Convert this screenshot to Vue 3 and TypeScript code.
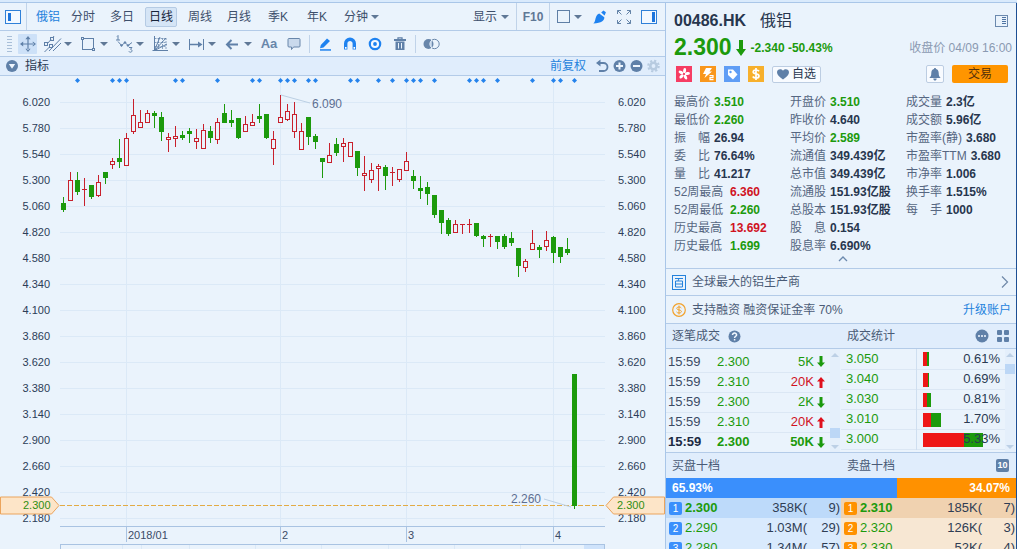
<script setup lang="ts">
import { ref } from 'vue'

type Candle = [up: 0 | 1, high: number, top: number, bottom: number, low: number]

// Vertical positions of high, body top, body bottom and low for each session
const candles: Candle[] = [
  [0, 197, 203, 209, 211], [1, 172, 180, 200, 200], [0, 172, 180, 191, 194], [1, 178, 189, 189, 205],
  [0, 185, 185, 196, 198], [1, 175, 182, 195, 196], [0, 172, 172, 177, 183], [1, 158, 161, 164, 168],
  [0, 139, 158, 161, 167], [1, 133, 138, 165, 165], [1, 99, 115, 131, 133], [1, 110, 122, 127, 127],
  [1, 110, 113, 122, 122], [0, 111, 113, 115, 127], [0, 112, 117, 131, 140], [1, 133, 137, 139, 151],
  [1, 126, 136, 138, 146], [0, 131, 135, 137, 139], [0, 128, 131, 133, 142], [1, 129, 138, 141, 148],
  [1, 124, 130, 148, 148], [0, 126, 131, 137, 142], [1, 118, 122, 139, 143], [0, 104, 113, 122, 122],
  [0, 110, 120, 122, 126], [0, 118, 118, 137, 138], [1, 116, 124, 131, 131], [1, 114, 122, 125, 125],
  [0, 104, 116, 118, 122], [0, 114, 114, 137, 138], [1, 131, 139, 148, 164], [1, 95, 117, 122, 122],
  [1, 104, 111, 119, 120], [1, 102, 114, 131, 137], [1, 123, 131, 149, 149], [0, 117, 117, 136, 144],
  [0, 134, 136, 141, 148], [0, 158, 158, 161, 177], [1, 143, 155, 162, 162], [0, 138, 144, 152, 155],
  [1, 138, 143, 146, 161], [1, 142, 142, 156, 156], [0, 151, 151, 167, 175], [1, 156, 173, 175, 190],
  [1, 163, 170, 179, 182], [1, 164, 166, 168, 190], [0, 165, 167, 175, 189], [1, 167, 172, 172, 185],
  [1, 169, 169, 179, 181], [1, 152, 161, 170, 170], [0, 170, 176, 180, 188], [0, 176, 188, 190, 198],
  [0, 182, 187, 193, 204], [0, 195, 195, 214, 217], [0, 210, 210, 222, 233], [0, 218, 220, 233, 235],
  [1, 220, 224, 232, 232], [1, 224, 224, 224, 233], [1, 219, 224, 224, 232], [0, 223, 223, 235, 236],
  [0, 235, 236, 238, 246], [1, 234, 236, 236, 246], [0, 236, 236, 241, 248], [0, 234, 236, 246, 248],
  [0, 232, 238, 242, 245], [0, 248, 248, 265, 276], [1, 259, 261, 267, 271], [1, 230, 243, 249, 249],
  [0, 245, 247, 249, 257], [1, 231, 240, 246, 250], [0, 236, 237, 252, 262], [0, 247, 247, 256, 262],
  [0, 238, 249, 252, 254], [0, 374, 374, 505, 508],
]
const events = [2, 7, 8, 9, 16, 17, 22, 27, 28, 31, 32, 33, 35, 36, 41, 42, 45, 47, 49, 50, 51, 53, 58, 59, 60, 62, 67, 70, 71, 73]
const cx = (i: number) => 63 + i * 7
const prices = Array.from({ length: 17 }, (_, i) => (6.02 - i * 0.24).toFixed(3))
const months = [
  { x: 126, label: '2018/01' },
  { x: 280, label: '2' },
  { x: 406, label: '3' },
  { x: 553, label: '4' },
]

const periods = ['分时', '多日', '日线', '周线', '月线', '季K', '年K']
const period = ref('日线')
const drawTools = [
  { id: 'channel', name: '平行线' },
  { id: 'rect', name: '矩形' },
  { id: 'wave', name: '波浪' },
  { id: 'gann', name: '江恩' },
  { id: 'range', name: '区间' },
  { id: 'arrow', name: '箭头' },
]

type Stat = { k: string; v: string; c?: string; wide?: boolean }
const stats: Stat[][] = [
  [
    { k: '最高价', v: '3.510', c: 'down' }, { k: '最低价', v: '2.260', c: 'down' }, { k: '振 幅', v: '26.94' },
    { k: '委 比', v: '76.64%' }, { k: '量 比', v: '41.217' }, { k: '52周最高', v: '6.360', c: 'up', wide: true },
    { k: '52周最低', v: '2.260', c: 'down', wide: true }, { k: '历史最高', v: '13.692', c: 'up', wide: true },
    { k: '历史最低', v: '1.699', c: 'down', wide: true },
  ],
  [
    { k: '开盘价', v: '3.510', c: 'down' }, { k: '昨收价', v: '4.640' }, { k: '平均价', v: '2.589', c: 'down' },
    { k: '流通值', v: '349.439亿' }, { k: '总市值', v: '349.439亿' }, { k: '流通股', v: '151.93亿股' },
    { k: '总股本', v: '151.93亿股' }, { k: '股 息', v: '0.154' }, { k: '股息率', v: '6.690%' },
  ],
  [
    { k: '成交量', v: '2.3亿' }, { k: '成交额', v: '5.96亿' }, { k: '市盈率(静)', v: '3.680', wide: true },
    { k: '市盈率TTM', v: '3.680', wide: true }, { k: '市净率', v: '1.006' }, { k: '换手率', v: '1.515%' },
    { k: '每 手', v: '1000' },
  ],
]
const trades = [
  { p: '2.300', q: '5K', up: false },
  { p: '2.310', q: '20K', up: true },
  { p: '2.300', q: '2K', up: false },
  { p: '2.310', q: '20K', up: true },
  { p: '2.300', q: '50K', up: false },
]
const volumes = [
  { p: '3.050', buy: 4, sell: 2, pct: '0.61%' },
  { p: '3.040', buy: 5, sell: 1, pct: '0.69%' },
  { p: '3.030', buy: 4, sell: 4, pct: '0.81%' },
  { p: '3.010', buy: 8, sell: 10, pct: '1.70%' },
  { p: '3.000', buy: 41, sell: 19, pct: '5.33%' },
]
const ratio = { bid: 65.93, ask: 34.07 }
const depth = [
  { side: 'bid', name: '买盘', rows: [['2.300', '358K', '9'], ['2.290', '1.03M', '29'], ['2.280', '1.34M', '57']] },
  { side: 'ask', name: '卖盘', rows: [['2.310', '185K', '7'], ['2.320', '126K', '3'], ['2.330', '52K', '4']] },
]
</script>

<template>
  <div class="app">
    <div class="strip"></div>
    <div class="panes">
      <main class="left">
        <nav class="bar periods">
          <button class="ico side-toggle" aria-label="侧栏">
            <svg width="16" height="14" viewBox="0 0 16 14"><rect x=".5" y=".5" width="15" height="13" fill="#f2f8ff" stroke="#2f80d8" /><rect x="3" y="3" width="3" height="8" fill="#1b74dc" /></svg>
          </button>
          <i class="vline full"></i>
          <div class="tabs">
            <button class="symbol">俄铝</button>
            <button v-for="p in periods" :key="p" class="tab" :class="{ on: p === period }" @click="period = p">{{ p }}</button>
            <button class="menu">分钟<i class="tri"></i></button>
          </div>
          <div class="view">
            <button class="menu">显示<i class="tri"></i></button>
            <i class="vline full"></i>
            <button class="f10">F10</button>
            <i class="vline full"></i>
            <button class="menu" aria-label="布局"><svg width="13" height="13" viewBox="0 0 13 13"><rect x=".5" y=".5" width="12" height="12" fill="none" stroke="#5f7fa6" /></svg><i class="tri"></i></button>
            <button class="ico" aria-label="画笔">
              <svg width="14" height="14" viewBox="0 0 14 14" fill="#1e82f0"><path d="M8.200 2.600 10.400.4 12.900 2.200 11.600 5.400z" /><path d="M6.200 3.600 11.300 7.200C11.600 10.500 8.500 13 .4 13.500 2.600 11.600 1.900 9.200 3.200 6.600 3.900 5 5 4 6.200 3.600z" /></svg>
            </button>
            <button class="ico" aria-label="全屏">
              <svg width="14" height="14" viewBox="0 0 14 14" fill="none" stroke="#6484a8"><path d="M4 .5H.5V4M.5.5l4 4M10 .5h3.500V4M13.500.5l-4 4M4 13.500H.5V10M.5 13.500l4-4M10 13.500h3.500V10M13.500 13.500l-4-4" /></svg>
            </button>
            <button class="ico" aria-label="报价栏">
              <svg width="16" height="14" viewBox="0 0 16 14"><rect x=".5" y=".5" width="15" height="13" fill="#f2f8ff" stroke="#2f80d8" /><rect x="11" y="2" width="3" height="10" fill="#1b74dc" /></svg>
            </button>
          </div>
        </nav>

        <div class="bar tools">
          <svg class="grip" width="6" height="16" viewBox="0 0 6 16" stroke="#a9bfd8"><path d="M0 .5h5M0 3.500h5M0 6.500h5M0 9.500h5M0 12.500h5M0 15.500h5" /></svg>
          <button class="move" aria-label="移动">
            <svg width="16" height="16" viewBox="0 0 16 16" fill="#5f80a8"><path d="M7.400 2h1.200v12H7.400zM2 7.400h12v1.200H2zM8 0l2.600 3.200H5.400zM8 16l2.600-3.200H5.400zM0 8l3.200-2.600v5.200zM16 8l-3.200-2.600v5.200z" /></svg>
          </button>
          <div class="draw">
            <button v-for="t in drawTools" :key="t.id" :aria-label="t.name">
              <svg width="20" height="18" viewBox="0 0 20 18" fill="none" stroke="#5f80a8">
                <template v-if="t.id === 'channel'">
                  <path d="M4.500 8.500 8 4.500M10 2.500 11 1M6 16 18 3.500M10 16 18 8M1.500 17l5-5" />
                  <rect x="1.500" y="7.500" width="3" height="3" /><rect x="7.500" y="2.500" width="3" height="3" /><rect x="6.500" y="9.500" width="3" height="3" />
                </template>
                <template v-else-if="t.id === 'rect'">
                  <rect x="3.500" y="3.500" width="11" height="11" />
                  <g fill="#eaf3fc"><rect x="2.500" y="2.500" width="2" height="2" /><rect x="13.500" y="13.500" width="2" height="2" /></g>
                </template>
                <template v-else-if="t.id === 'wave'">
                  <path d="M3 6.500 6.500 10.500 10 7.500 13 10.500 17 7.500M2 1.500l1-1v4.500M1 5h4M14 12.500h3l-1.500 1.800c2 .2 2 2.900-.1 2.900-.8 0-1.300-.3-1.500-.8" />
                  <g fill="#5f80a8"><circle cx="6.500" cy="10.500" r=".8" /><circle cx="10" cy="7.500" r=".8" /><circle cx="13" cy="10.500" r=".8" /></g>
                </template>
                <template v-else-if="t.id === 'gann'">
                  <path d="M3.500 1v15M1.500 15.500H17M3.500 15.500 15 3M3.500 15.500 16 9M3.500 15.500 9 2" />
                  <path d="M3.500 3.500H15M3.500 7.500H15M3.500 11.500h12M7.500 3v12M11.500 3v12M15 3v12" stroke-width=".7" stroke-dasharray="2 1" />
                </template>
                <template v-else-if="t.id === 'range'">
                  <path d="M2.500 4v11M16.500 4v11" /><path d="M3 9.500h9" stroke-width="1.500" /><path d="M11 6.500 15.500 9.500 11 12.500z" fill="#5f80a8" stroke="none" />
                </template>
                <template v-else>
                  <path d="M4 9.500h11M8.500 5 4 9.500 8.500 14" stroke-width="2" />
                </template>
              </svg>
              <i class="tri"></i>
            </button>
          </div>
          <div class="marks">
            <button class="aa">Aa</button>
            <button aria-label="备注"><svg width="14" height="14" viewBox="0 0 14 14"><path d="M2 1.500h10a1 1 0 0 1 1 1V9a1 1 0 0 1-1 1H6.500l-2 2.500V10H2a1 1 0 0 1-1-1V2.500a1 1 0 0 1 1-1z" fill="#c9d9ec" stroke="#6886aa" /></svg></button>
            <i class="vline"></i>
            <button aria-label="铅笔"><svg width="14" height="14" viewBox="0 0 14 14" fill="#1e82f0"><path d="M9 1.500 12 4 5.500 10.500 2 11.200 2.800 8z" /><path d="M2 12.200h11v1.500H2z" /></svg></button>
            <button aria-label="磁铁"><svg width="14" height="14" viewBox="0 0 14 14"><path d="M2.700 12.500V6.500a4.300 4.300 0 0 1 8.600 0v6" fill="none" stroke="#1e82f0" stroke-width="3.400" /><path d="M2 10h1.600v1.700H2zM10.500 10h1.600v1.700h-1.600z" fill="#fff" /></svg></button>
            <button aria-label="显示画线"><svg width="14" height="14" viewBox="0 0 14 14"><circle cx="7" cy="7" r="5.200" fill="#f4f9ff" stroke="#1e82f0" stroke-width="2.200" /><circle cx="7" cy="7" r="1.900" fill="#1e82f0" /></svg></button>
            <button aria-label="删除"><svg width="12" height="14" viewBox="0 0 12 14"><path d="M4 2V.9h4V2" fill="none" stroke="#5f80a8" stroke-width="1.300" /><path d="M0 2h12v2H0zM1.500 4.500h9V13h-9z" fill="#5f80a8" /><path d="M4.500 6v5.500M7.500 6v5.500" stroke="#eaf3fc" /></svg></button>
            <i class="vline"></i>
            <button aria-label="对比"><svg width="17" height="12" viewBox="0 0 17 12"><circle cx="11.500" cy="6" r="4.700" fill="none" stroke="#6886aa" /><circle cx="5.500" cy="6" r="5" fill="#6886aa" /><path d="M9 2a4.800 4.800 0 0 0 0 8" fill="#b5c9e0" stroke="#e6f0fb" /></svg></button>
          </div>
        </div>

        <div class="bar indicators">
          <button class="ico" aria-label="展开指标"><svg width="14" height="14" viewBox="0 0 14 14"><circle cx="7" cy="7" r="6" fill="#5f80a8" /><path d="M3.800 5h6.400L7 9.800z" fill="#eef5fd" /></svg></button>
          <span class="ind-title">指标</span>
          <a href="#" class="adjust">前复权</a>
          <div class="zoomers">
            <button aria-label="还原"><svg width="13" height="14" viewBox="0 0 13 14"><path d="M2 4h5.500a4 4 0 0 1 0 8H3" fill="none" stroke="#5f80a8" stroke-width="1.800" /><path d="M0 4 4.500.5v7z" fill="#5f80a8" /></svg></button>
            <button aria-label="放大"><svg width="13" height="14" viewBox="0 0 13 14"><circle cx="6.500" cy="7" r="6" fill="#5f80a8" /><path d="M6.500 3.500v7M3 7h7" stroke="#eef5fd" stroke-width="2" /></svg></button>
            <button aria-label="缩小"><svg width="13" height="14" viewBox="0 0 13 14"><circle cx="6.500" cy="7" r="6" fill="#5f80a8" /><path d="M3 7h7" stroke="#eef5fd" stroke-width="2" /></svg></button>
            <button aria-label="设置"><svg width="13" height="14" viewBox="0 0 13 14"><circle cx="6.500" cy="7" r="3.200" fill="none" stroke="#b7cbe0" stroke-width="2.600" /><circle cx="6.500" cy="7" r="5.300" fill="none" stroke="#b7cbe0" stroke-width="2" stroke-dasharray="2.160 2" /></svg></button>
          </div>
        </div>

        <section class="chart">
          <ol class="axis lhs"><li v-for="p in prices" :key="p">{{ p }}</li></ol>
          <svg class="plot" viewBox="60 76 545 473" role="img" aria-label="日线图" shape-rendering="crispEdges">
            <g fill="#dbe9f7">
              <rect v-for="(p, i) in prices" :key="p" x="60" :y="102 + i * 26" width="545" height="1" />
              <rect v-for="m in months" :key="m.x" :x="m.x" y="76" width="1" height="450" />
            </g>
            <g fill="#2482ec" shape-rendering="auto">
              <path v-for="e in events" :key="e" :d="`M${cx(e) + 0.5} 78l2.500 2.500-2.500 2.500-2.500-2.500z`" />
            </g>
            <g fill="#e2ab45">
              <rect v-for="n in 78" :key="n" :x="53 + n * 7" y="505" width="5" height="1" />
            </g>
            <g v-for="(c, i) in candles" :key="i" :fill="c[0] ? '#c8202c' : '#1c9a0c'">
              <rect :x="cx(i)" :y="c[1]" width="1" :height="c[4] - c[1] + 1" />
              <rect :x="cx(i) - 2" :y="c[2]" width="5" :height="c[3] - c[2] + 1" />
              <rect v-if="c[0] && c[3] - c[2] > 1" :x="cx(i) - 1" :y="c[2] + 1" width="3" :height="c[3] - c[2] - 1" fill="#eaf3fc" />
            </g>
            <g stroke="#bcd0e4" shape-rendering="auto"><path d="M281 95 310 103M544 499 571 507" /></g>
            <g class="note"><text x="312" y="108">6.090</text><text x="511" y="503">2.260</text></g>
            <g fill="#a9c3e2">
              <rect x="60" y="526" width="545" height="1" /><rect x="60" y="544" width="545" height="1" />
              <rect x="60" y="544" width="1" height="6" /><rect x="604" y="544" width="1" height="6" />
              <rect v-for="m in months" :key="m.x" :x="m.x" y="527" width="1" height="15" />
            </g>
            <rect x="584" y="545" width="20" height="4" fill="#cfe3fb" />
            <g fill="#dbe9f7"><rect v-for="x in [122, 141, 189, 255, 321, 388, 454, 520]" :key="x" :x="x" y="545" width="1" height="4" /></g>
            <g class="months"><text v-for="m in months" :key="m.x" :x="m.x + 2" y="539">{{ m.label }}</text></g>
          </svg>
          <ol class="axis rhs"><li v-for="p in prices" :key="p">{{ p }}</li></ol>
          <svg class="tag tag-l" width="60" height="19" viewBox="0 0 60 19"><path d="M.5 1H51.500L59 9.500 51.500 18H.5z" fill="#fde5c8" stroke="#eba45c" /><text x="23" y="13">2.300</text></svg>
          <svg class="tag tag-r" width="60" height="19" viewBox="0 0 60 19"><path d="M59.500 1H8.500L1 9.500 8.500 18H59.500z" fill="#fde5c8" stroke="#eba45c" /><text x="12" y="13">2.300</text></svg>
        </section>
      </main>

      <aside class="right">
        <header class="quote">
          <div class="title">
            <strong>00486.HK</strong><span>俄铝</span>
            <button aria-label="详情"><svg width="13" height="12" viewBox="0 0 13 12"><rect x=".5" y=".5" width="12" height="11" fill="none" stroke="#6b89ae" /><path d="M7 2.500h4M7 4.500h4M7 6.500h4M7 8.500h4" stroke="#4f74a3" /></svg></button>
          </div>
          <div class="last down">
            <b class="price">2.300</b>
            <svg width="10" height="16" viewBox="0 0 10 16"><path d="M3 0h4v9h3l-5 7L0 9h3z" fill="#1c9a0c" /></svg>
            <b class="chg">-2.340 -50.43%</b>
            <span class="time">收盘价 04/09 16:00</span>
          </div>
          <div class="badges">
            <svg width="16" height="16" viewBox="0 0 16 16"><rect width="16" height="16" fill="#f63d63" /><g fill="#fff"><ellipse v-for="a in [10, 82, 154, 226, 298]" :key="a" cx="8" cy="4.600" rx="1.500" ry="2.600" :transform="`rotate(${a} 8 8)`" /></g><circle cx="8" cy="8" r=".9" fill="#f63d63" /></svg>
            <svg width="16" height="16" viewBox="0 0 16 16"><rect width="16" height="16" fill="#f9971c" /><path d="M6 2h6L9.500 5.500H12L4.500 12l1.500-4H3z" fill="#fff" /><path d="M9.500 9.600H13v2h-3v2h3.500" fill="none" stroke="#fff" stroke-width="1.200" /></svg>
            <svg width="16" height="16" viewBox="0 0 16 16"><rect width="16" height="16" fill="#5f9df5" /><path d="M4 3.500h5L13.500 8.500 9 13.500 4 9z" fill="#fff" /><circle cx="6.500" cy="6" r="1.200" fill="#5f9df5" /></svg>
            <svg width="16" height="16" viewBox="0 0 16 16"><rect width="16" height="16" fill="#f7b02c" /><path d="M11 5.300C10.300 4.200 9.200 4 8 4 6.300 4 5.200 4.800 5.200 6c0 2.700 5.800 1.200 5.800 4 0 1.300-1.300 2-3 2-1.400 0-2.600-.4-3.200-1.500M8 2v12" fill="none" stroke="#fff" stroke-width="1.700" /></svg>
            <button class="fav"><svg width="12" height="11" viewBox="0 0 12 11"><path d="M6 10.500C2 7.500 0 5.500 0 3.200 0 .3 4-.9 6 1.800 8-.9 12 .3 12 3.200c0 2.300-2 4.300-6 7.300z" fill="#5f80a8" /></svg>自选</button>
            <button class="bell" aria-label="提醒"><svg width="12" height="13" viewBox="0 0 12 13"><path d="M6 0c.8 0 1 .5 1 1 2 .5 2.700 2.200 2.700 4 0 2.600.6 3.800 2 5H.3c1.400-1.200 2-2.400 2-5C2.300 3.200 3 1.500 5 1c0-.5.2-1 1-1zM4.300 10.500h3.400C7.500 12 7 12.600 6 12.600s-1.500-.6-1.700-2.100z" fill="#5f80a8" /></svg></button>
            <button class="trade">交易</button>
          </div>
          <div class="stats">
            <dl v-for="(col, i) in stats" :key="i">
              <div v-for="s in col" :key="s.k"><dt :class="{ wide: s.wide, spread: s.k.includes(' ') }">{{ s.k }}</dt><dd :class="s.c">{{ s.v }}</dd></div>
            </dl>
          </div>
          <button class="fold" aria-label="收起"><svg width="10" height="6" viewBox="0 0 10 6"><path d="M1 5 5 1 9 5" fill="none" stroke="#6b89ae" stroke-width="1.300" /></svg></button>
        </header>

        <a href="#" class="info company">
          <svg width="14" height="15" viewBox="0 0 14 15" fill="none" stroke="#2482dc"><rect x=".5" y=".5" width="13" height="14" /><path d="M3 3.500h8M7 3.500 6 6M3.500 6h7v6h-7zM3.500 9h7" /></svg>
          <span>全球最大的铝生产商</span>
          <svg class="go" width="8" height="12" viewBox="0 0 8 12"><path d="M1 .5 6.500 6 1 11.500" fill="none" stroke="#6f88a8" stroke-width="1.200" /></svg>
        </a>
        <div class="info margin">
          <svg width="14" height="14" viewBox="0 0 14 14" fill="none" stroke="#f2a22c"><circle cx="7" cy="7" r="6.300" stroke-width="1.200" /><path d="M9.300 5C8.800 4.200 8 4 7 4c-1.300 0-2.200.5-2.200 1.500C4.800 7.500 9.400 6.400 9.400 8.500c0 1-1 1.500-2.400 1.500-1.100 0-2-.3-2.500-1.100M7 2.500v9" /></svg>
          <span>支持融资 融资保证金率 70%</span>
          <a href="#">升级账户</a>
        </div>

        <div class="heads">
          <h2>逐笔成交<button aria-label="帮助"><svg width="13" height="13" viewBox="0 0 13 13"><circle cx="6.500" cy="6.500" r="6" fill="#5f80a8" /><path d="M4.500 5C4.500 2.400 8.700 2.500 8.600 5 8.500 6.300 6.600 6.300 6.600 8M6.600 9v1.500" fill="none" stroke="#f2f8ff" stroke-width="1.500" /></svg></button></h2>
          <h2>成交统计</h2>
          <button aria-label="更多"><svg width="14" height="14" viewBox="0 0 14 14"><circle cx="7" cy="7" r="6.500" fill="#5f80a8" /><path d="M3 7h2M6 7h2M9 7h2" stroke="#f2f8ff" stroke-width="1.500" /></svg></button>
          <button aria-label="分栏"><svg width="12" height="12" viewBox="0 0 12 12" fill="#5f80a8"><rect width="5" height="5" rx="1" /><rect x="7" width="5" height="5" rx="1" /><rect y="7" width="5" height="5" rx="1" /><rect x="7" y="7" width="5" height="5" rx="1" /></svg></button>
        </div>

        <div class="flow">
          <div class="pane ticks">
            <table>
              <tbody>
                <tr v-for="(t, i) in trades" :key="i" :class="{ latest: i === 4 }">
                  <td class="t">15:59</td><td class="p down">{{ t.p }}</td>
                  <td class="q" :class="t.up ? 'up' : 'down'">{{ t.q }}</td>
                  <td class="a"><svg width="8" height="11" viewBox="0 0 8 11"><path v-if="t.up" d="M4 0 8 4.500H5.500V11h-3V4.500H0z" fill="#e0101c" /><path v-else d="M4 11 8 6.500H5.500V0h-3v6.500H0z" fill="#1c9a0c" /></svg></td>
                </tr>
              </tbody>
            </table>
            <div class="scroll end"><i class="cap up-cap"></i><i class="thumb"></i><i class="cap"></i></div>
          </div>
          <div class="pane vols">
            <table>
              <tbody>
                <tr v-for="v in volumes" :key="v.p">
                  <td class="p down">{{ v.p }}</td>
                  <td class="v"><span class="bars"><i class="buy" :style="{ width: v.buy + 'px' }"></i><i class="sell" :style="{ width: v.sell + 'px' }"></i></span><span class="pct">{{ v.pct }}</span></td>
                </tr>
              </tbody>
            </table>
            <div class="scroll"><i class="cap up-cap"></i><i class="thumb"></i><i class="space"></i><i class="cap"></i></div>
          </div>
        </div>

        <div class="heads depth-head">
          <h2>买盘十档</h2>
          <h2>卖盘十档</h2>
          <button class="ten">10</button>
        </div>
        <div class="ratio">
          <b class="bid" :style="{ width: ratio.bid + '%' }">{{ ratio.bid }}%</b><b class="ask">{{ ratio.ask }}%</b>
        </div>
        <div class="depth">
          <table v-for="d in depth" :key="d.side" :class="d.side" :aria-label="d.name">
            <tbody>
              <tr v-for="(r, i) in d.rows" :key="i">
                <td class="n"><span>{{ i + 1 }}</span></td><td class="p down">{{ r[0] }}</td><td class="q">{{ r[1] }}(</td><td class="c">{{ r[2] }})</td>
              </tr>
            </tbody>
          </table>
        </div>
      </aside>
    </div>
  </div>
</template>

<style>
body { margin: 0; overflow: hidden; }
</style>

<style scoped>
* { box-sizing: border-box; }
.app { height: 100vh; display: flex; flex-direction: column; overflow: hidden; background: #eaf3fc; color: #3d4f6b; font: 12px/18px "Liberation Sans", "Noto Sans CJK SC", sans-serif; }
button { margin: 0; padding: 0; border: 0; background: none; color: inherit; font: inherit; cursor: pointer; }
a { color: #2482dc; text-decoration: none; }
svg { display: block; flex: none; }
table { border-collapse: collapse; table-layout: fixed; }
td { padding: 0; }
ol, dl, dd, h2 { margin: 0; padding: 0; list-style: none; font-weight: normal; font-size: 12px; }
.up { color: #d0121f; }
.down { color: #1c9a0c; }
.strip { flex: none; height: 3px; background: #d9eafc; border-bottom: 1px solid #a9c6e8; }
.panes { flex: 1; min-height: 0; display: flex; }
.left { flex: 1; min-width: 0; display: flex; flex-direction: column; }
.bar { flex: none; display: flex; align-items: center; border-bottom: 1px solid #b3cbe8; }
.vline { width: 1px; height: 18px; background: #c0d3e9; }
.vline.full { height: 100%; }
.tri { display: inline-block; border: 4px solid transparent; border-top: 4px solid #5f7896; border-bottom: 0; }

.periods { height: 28px; }
.side-toggle { margin: 0 5px; }
.tabs { display: flex; gap: 7px; margin-left: 4px; align-items: center; flex: 1; }
.symbol { width: 29px; text-align: right; color: #2482dc; }
.tab { width: 32px; height: 20px; border: 1px solid transparent; border-radius: 2px; line-height: 18px; }
.tab.on { background: #d5e5f6; border-color: #b5cbe4; color: #16243a; }
.menu { display: flex; align-items: center; gap: 4px; }
.tabs .menu { padding-left: 4px; gap: 3px; }
.view { display: flex; align-items: center; height: 100%; padding-right: 8px; }
.view .ico { margin-left: 10px; }
.view .menu { margin: 0 7px; }
.view .menu + .ico { margin-left: 4px; }
.f10 { width: 32px; font-weight: bold; color: #5f7896; }

.tools { height: 26px; padding-left: 7px; }
.grip { margin-right: 5px; }
.move { width: 19px; height: 20px; display: grid; place-items: center; background: #cde1f8; border-radius: 1px; margin-right: 6px; }
.draw { display: flex; }
.draw button { width: 36px; display: flex; align-items: center; gap: 1px; }
.marks { display: flex; gap: 5px; align-items: center; }
.marks button { width: 20px; display: grid; place-items: center; }
.marks .aa { color: #6886aa; font-size: 13px; font-weight: bold; }

.indicators { height: 19px; background: #e0edfc; padding: 0 5px; }
.ind-title { flex: 1; margin-left: 6px; color: #2b3a52; }
.adjust { margin-right: 10px; }
.zoomers { display: flex; gap: 4px; }

.chart { position: relative; flex: 1; min-height: 0; display: grid; grid-template-columns: 60px 1fr 60px; align-items: start; overflow: hidden; }
.plot { width: 100%; height: auto; }
.axis { padding-top: 13px; font-size: 11px; color: #2c3d58; }
.axis li { height: 26px; line-height: 26px; }
.lhs { text-align: right; padding-right: 10px; }
.rhs { padding-left: 13px; }
.note { font-size: 12px; fill: #5d6f92; }
.months { font-size: 11px; fill: #3b4b66; }
.tag { position: absolute; top: 420px; font-size: 11px; }
.tag text { fill: #2f8f12; }
.tag-l { left: 0; }
.tag-r { right: 0; }

.right { flex: none; width: 352px; border-left: 1px solid #a9c6e8; border-right: 1px solid #1d4f94; display: flex; flex-direction: column; }
.right > * { flex: none; }
.quote { padding: 0 4px 0 8px; border-bottom: 1px solid #b3cbe8; }
.title { height: 36px; display: flex; align-items: center; font-size: 16px; color: #27364e; }
.title span { margin-left: 14px; }
.title button { margin-left: auto; margin-right: 4px; }
.last { height: 17px; display: flex; align-items: center; }
.price { font-size: 23px; line-height: 17px; }
.last svg { margin: 0 5px 0 4px; }
.time { margin-left: auto; color: #8a9ab2; }
.badges { height: 18px; margin: 9px 4px 10px 2px; display: flex; align-items: center; gap: 8px; }
.fav { height: 17px; padding: 0 4px; display: flex; align-items: center; gap: 3px; border: 1px solid #bccde2; border-radius: 2px; background: #f8fbff; color: #27364e; line-height: 15px; }
.bell { width: 18px; height: 18px; margin-left: auto; display: grid; place-items: center; border: 1px solid #bccde2; border-radius: 2px; background: #f8fbff; }
.trade { width: 56px; height: 18px; border-radius: 2px; background: #ff9500; color: #55310a; }
.stats { display: grid; grid-template-columns: 116px 116px 1fr; }
.stats dl > div { display: flex; gap: 4px; height: 18px; white-space: nowrap; }
dt { min-width: 36px; color: #566782; }
dt.wide { min-width: 52px; }
dt.spread { width: 36px; text-align-last: justify; }
dd { font-weight: bold; color: #27364e; }
dd.up { color: #d0121f; }
dd.down { color: #1c9a0c; }
.fold { width: 100%; height: 13px; display: flex; justify-content: center; padding-top: 1px; }
.info { display: flex; align-items: center; gap: 6px; padding: 0 5px 0 6px; border-bottom: 1px solid #b3cbe8; color: #4a5b76; }
.info > :last-child { margin-left: auto; }
.company { height: 27px; }
.go { margin-right: 2px; }
.margin { height: 28px; }

.heads { height: 25px; display: grid; grid-template-columns: 175px 1fr auto auto; align-items: center; gap: 0; padding-right: 7px; background: #e0edfc; border-bottom: 1px solid #b3cbe8; color: #4a5b76; }
.heads h2 { display: flex; align-items: center; gap: 8px; padding-left: 6px; }
.heads > button + button { margin-left: 8px; }
.depth-head { border-bottom: 0; }
.ten { width: 13px; height: 13px; border-radius: 2px; background: #5f80a8; color: #fff; font-size: 9px; line-height: 13px; font-weight: bold; }

.flow { height: 104px; display: grid; grid-template-columns: 175px 1fr; border-bottom: 1px solid #b3cbe8; overflow: hidden; font-size: 13px; }
.pane { display: flex; }
.pane table { flex: 1; height: 100px; }
.pane tr { height: 20px; border-bottom: 1px solid #dbe7f4; }
.ticks table { margin-top: 3px; }
.ticks .t { width: 51px; padding-left: 2px; color: #3a4a63; }
.latest { font-weight: bold; }
.ticks .latest .t { color: #1c2a42; }
.ticks .q { text-align: right; }
.ticks .a { width: 16px; padding-left: 3px; }
.vols .p { width: 75px; padding-left: 5px; border-right: 1px solid #cfdff0; }
.v { position: relative; text-align: right; padding-right: 5px; color: #2b3a52; }
.bars { position: absolute; left: 6px; top: 3px; display: flex; height: 14px; }
.buy { background: #ee1717; }
.sell { background: #1c9a0c; }
.pct { position: relative; }
.scroll { width: 10px; margin-right: 1px; padding: 4px 0; display: flex; flex-direction: column; align-items: center; gap: 7px; background: #e4effb; }
.scroll.end { justify-content: flex-start; }
.scroll.end .thumb { margin-top: auto; }
.thumb { width: 10px; height: 10px; background: #bcd7f6; }
.scroll .space { flex: 1; }
.cap { border: 4px solid transparent; border-top: 4px solid #bcd0e6; border-bottom: 0; }
.up-cap { border-top: 0; border-bottom: 4px solid #bcd0e6; }

.ratio { display: flex; height: 20px; line-height: 21px; color: #fff; }
.ratio b { padding: 0 6px; }
.ratio .bid { background: #3a8ffc; }
.ratio .ask { flex: 1; background: #ff9100; text-align: right; }
.depth { display: grid; grid-template-columns: 175px 1fr; align-items: start; font-size: 13px; color: #2f3d54; }
.depth table { width: 100%; }
.depth tr { height: 20px; }
.depth .n { width: 19px; padding-left: 3px; }
.depth .p { width: 50px; }
.depth .q { text-align: right; }
.depth .c { width: 34px; padding-right: 1px; text-align: right; }
.n span { display: block; width: 13px; height: 13px; border-radius: 2px; background: #3a8ffc; color: #fff; font-size: 10px; line-height: 13px; text-align: center; }
.depth .ask .n span { background: #ff9100; }
.depth .bid { background: #d9eafd; }
.depth .bid tr:first-child { background: #bddafa; }
.depth .ask { background: #f7e7d3; }
.depth .ask tr:first-child { background: #f0d2b0; }
.depth tr:first-child .p { font-weight: bold; }
</style>
